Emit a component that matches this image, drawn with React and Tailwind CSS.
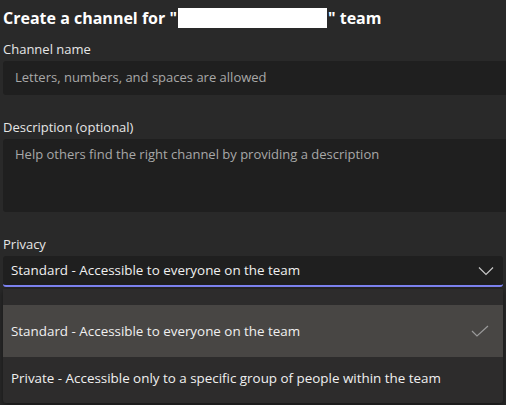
import React from "react";

function Chevron() {
  return (
    <svg width="16" height="10" viewBox="0 0 16 10" fill="none">
      <path d="M1 1.5 L8 8.5 L15 1.5" stroke="#c8c8c8" strokeWidth="1.2" />
    </svg>
  );
}

function Check() {
  return (
    <svg width="18" height="12" viewBox="0 0 18 12" fill="none">
      <path d="M1 6 L6 11 L17 1" stroke="#9a9a9a" strokeWidth="1.2" />
    </svg>
  );
}

export default function App() {
  return (
    <div
      className="w-[506px] h-[405px] bg-[#292929] text-[#e6e6e6] overflow-hidden"
      style={{ fontFamily: '"Open Sans", "Noto Sans", sans-serif' }}
    >
      <div className="pl-[3px] pt-[5px]">
        <h1 className="flex items-center h-[26px] text-[16px] font-bold text-white leading-none">
          <span>Create a channel for "</span>
          <span className="inline-block w-[149px] h-[20px] bg-white mx-[1px]" />
          <span>" team</span>
        </h1>

        <div className="mt-[9px] text-[13px] leading-[18px]">Channel name</div>
        <div className="mt-[3px] h-[34px] bg-[#1f1f1f] rounded-l-[3px] flex items-center pl-[12px] text-[13px] text-[#a8a8a8]">
          Letters, numbers, and spaces are allowed
        </div>

        <div className="mt-[23px] text-[13px] leading-[18px]">Description (optional)</div>
        <div className="mt-[3px] h-[73px] bg-[#1f1f1f] rounded-l-[3px] pl-[12px] pt-[6px] text-[13px] text-[#a8a8a8]">
          Help others find the right channel by providing a description
        </div>

        <div className="mt-[23px] text-[13px] leading-[18px]">Privacy</div>
        <div className="w-[500px]">
          <div className="mt-[3px] h-[31px] bg-[#1f1f1f] rounded-[3px] border-b-2 border-[#7f85f5] flex items-center justify-between pl-[8px] pr-[9px] text-[13.4px] text-[#f0f0f0]">
            <span>Standard - Accessible to everyone on the team</span>
            <Chevron />
          </div>
          <div className="mt-[2px] h-[114px] bg-[#2d2c2c] rounded-b-[3px] pt-[16px] shadow-[0_2px_6px_rgba(0,0,0,0.5)]">
            <div className="h-[52px] bg-[#484644] flex items-center justify-between pl-[8px] pr-[14px] text-[13.4px] text-[#f0f0f0]">
              <span>Standard - Accessible to everyone on the team</span>
              <Check />
            </div>
            <div className="h-[42px] flex items-center pl-[8px] text-[13.4px] text-[#f0f0f0]">
              Private - Accessible only to a specific group of people within the team
            </div>
          </div>
        </div>
      </div>
    </div>
  );
}
